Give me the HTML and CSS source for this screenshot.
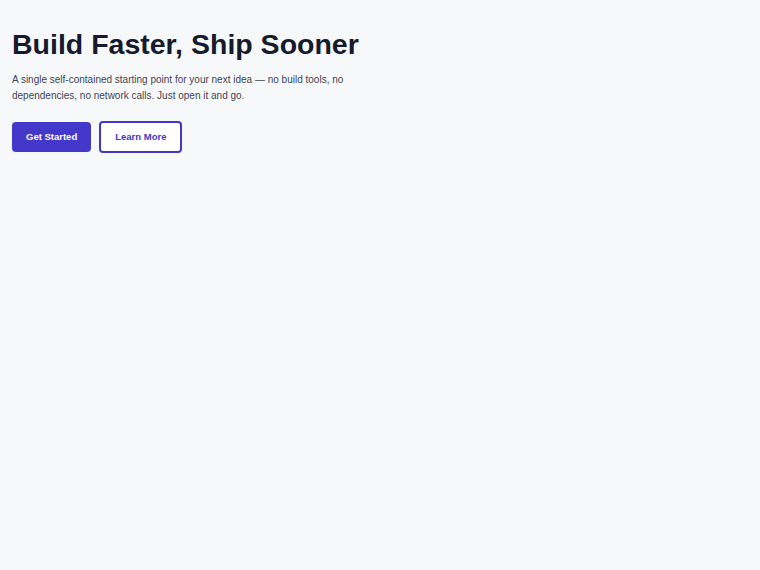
FILE: index.html
```html
<!DOCTYPE html>
<html lang="en">
<head>
    <meta charset="UTF-8">
    <meta name="viewport" content="width=device-width, initial-scale=1.0">
    <title>Build Faster, Ship Sooner</title>
    <link rel="stylesheet" href="styles.css">
</head>
<body>
    <main class="hero">
        <h1>Build Faster, Ship Sooner</h1>
        <p class="lead">A single self-contained starting point for your next idea — no build tools, no dependencies, no network calls. Just open it and go.</p>
        <div class="actions">
            <a class="btn btn-primary" href="#">Get Started</a>
            <a class="btn btn-outline" href="#">Learn More</a>
        </div>
    </main>
</body>
</html>
```

FILE: styles.css
```css
* {
    margin: 0;
    padding: 0;
    box-sizing: border-box;
}
body, html {
    width: 100%;
    height: 100%;
    background: #f7f8fa;
    font-family: "Liberation Sans", Arial, sans-serif;
}
.hero {
    padding: 27px 12px;
}
.hero h1 {
    font-size: 28.5px;
    line-height: 34px;
    font-weight: 700;
    color: #151a2d;
}
.lead {
    margin-top: 11px;
    max-width: 345px;
    font-size: 10px;
    line-height: 16px;
    color: #404553;
}
.actions {
    display: flex;
    align-items: center;
    gap: 8px;
    margin-top: 17px;
}
.btn {
    display: inline-block;
    font-size: 9.5px;
    font-weight: 700;
    text-decoration: none;
    border-radius: 4px;
    line-height: 14px;
}
.btn-primary {
    background: #4338ca;
    color: #fff;
    padding: 8px 14px;
}
.btn-outline {
    background: #fff;
    color: #4338ca;
    border: 2px solid #4338ca;
    padding: 7px 14px;
}
```
